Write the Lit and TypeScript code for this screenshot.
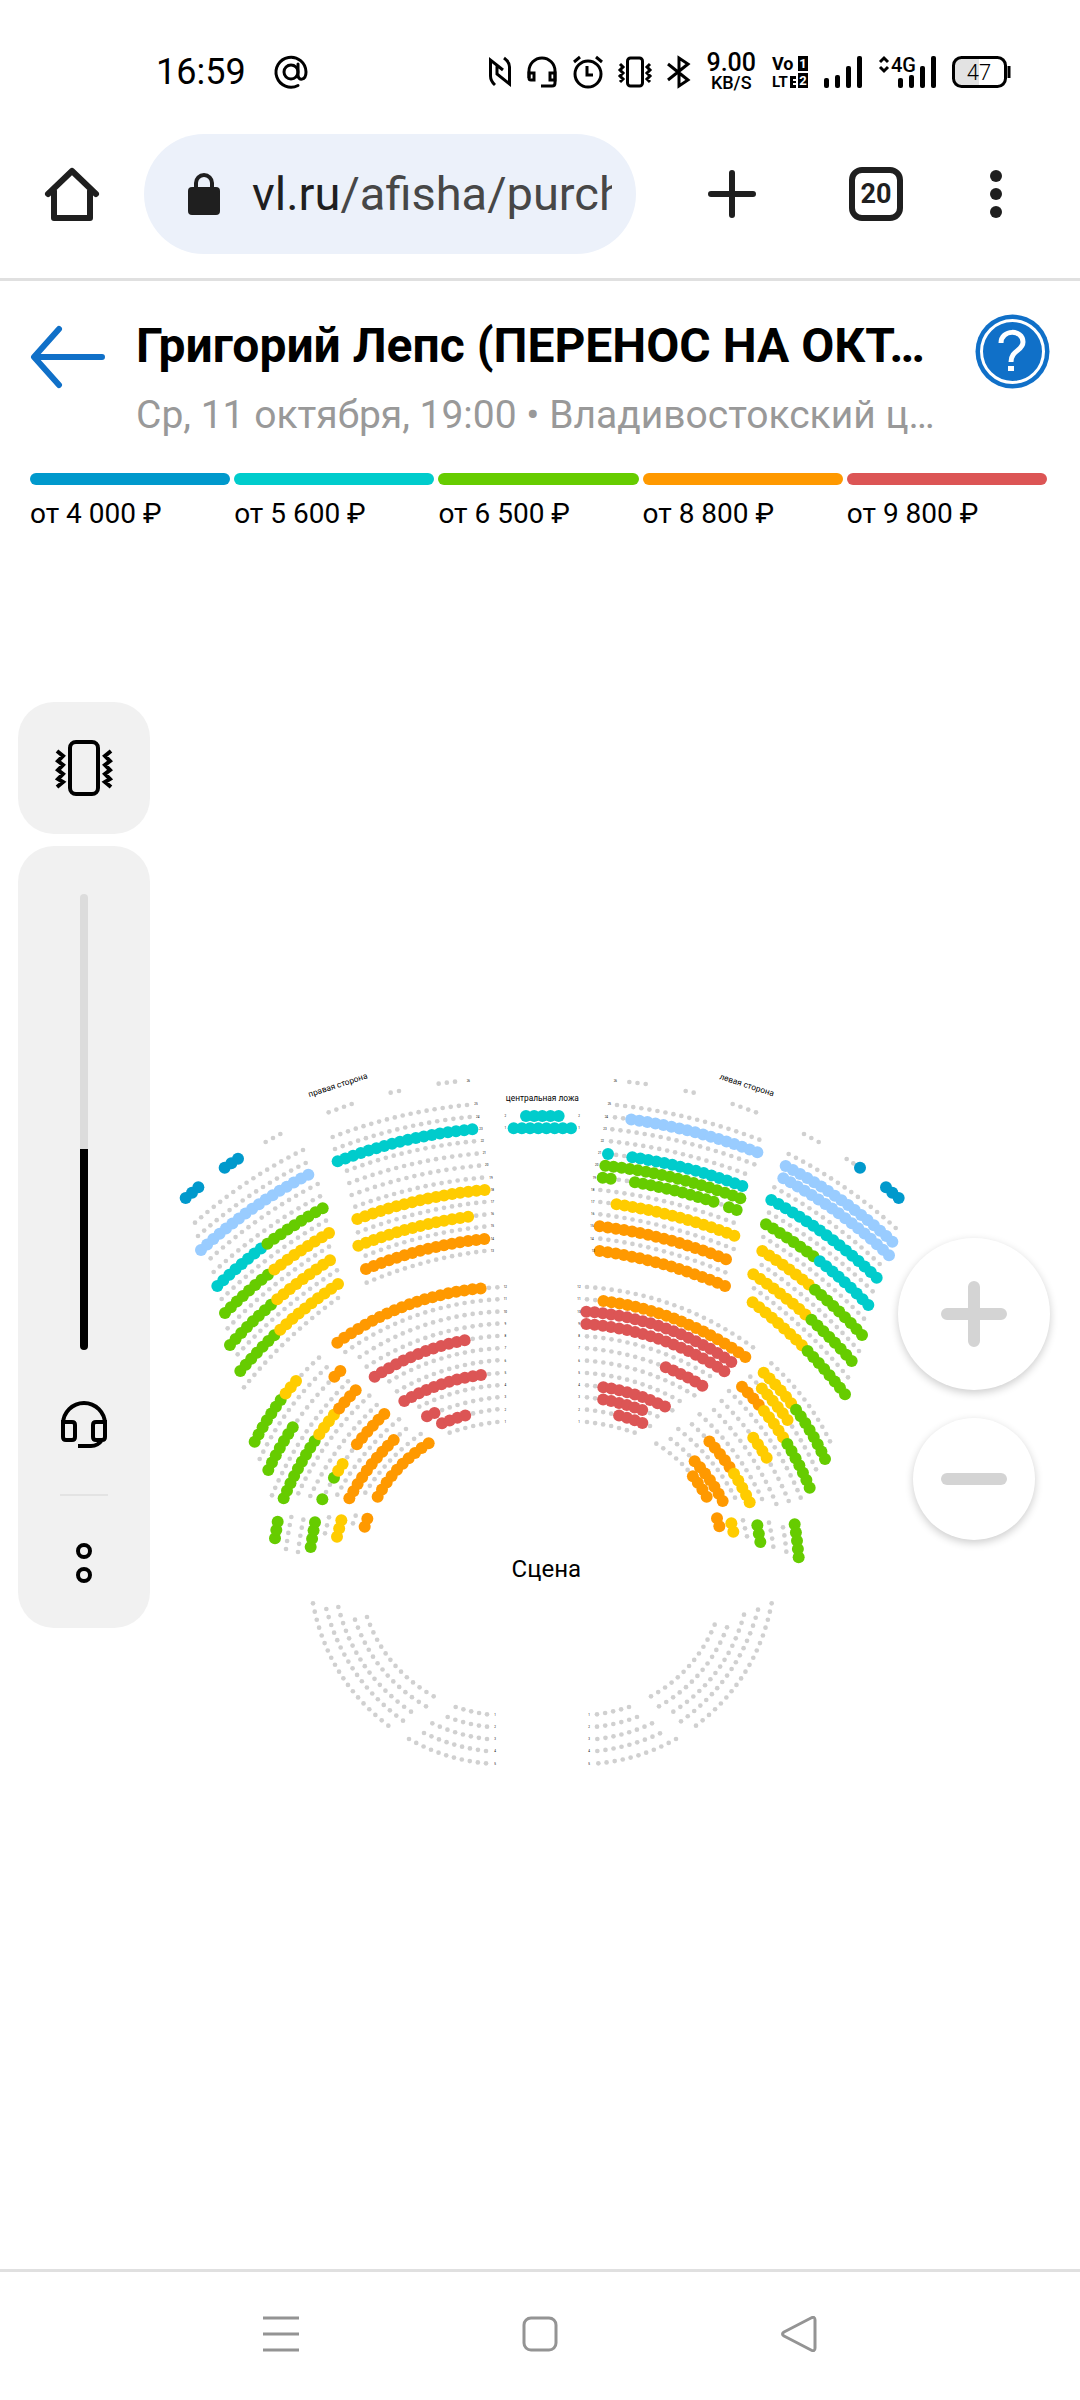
import { LitElement, html, svg, css } from "lit";
import { customElement, state } from "lit/decorators.js";

interface Price {
  label: string;
  color: string;
}

/** x1, y1, x2, y2, bulge, runs. A run is a colour key and a seat count; the last one fills the row. */
type Row = [number, number, number, number, number, string];

/** x, y, text */
type Label = [number, number, string];

const PRICES: Price[] = [
  { label: "от 4\u00a0000\u00a0₽", color: "#0099cc" },
  { label: "от 5\u00a0600\u00a0₽", color: "#00cccc" },
  { label: "от 6\u00a0500\u00a0₽", color: "#66cc00" },
  { label: "от 8\u00a0800\u00a0₽", color: "#ff9900" },
  { label: "от 9\u00a0800\u00a0₽", color: "#dc5555" },
];

const SEAT_COLORS: Record<string, string> = {
  ".": "#d0d0d0",
  a: "#99ccff",
  b: "#0099cc",
  c: "#00cccc",
  g: "#66cc00",
  y: "#ffcc00",
  o: "#ff9900",
  r: "#dc5555",
};

const SEAT_PITCH = 24.3;

const BALCONY: Row[] = [
  [506, 187, 575, 162, 0, "."],
  [692, 128, 717, 123, 0, "."],
  [836, 101, 885, 95, 0, "."],
  [317, 276, 361, 252, 0, "."],
  [194, 353, 234, 326, 0, "b"],
  [77, 444, 115, 412, 0, "b"],
  [1408, 96, 1457, 102, 0, "."],
  [1577, 123, 1601, 128, 0, "."],
  [1718, 162, 1788, 187, 0, "."],
  [1932, 252, 1976, 276, 0, "."],
  [2060, 327, 2100, 353, 0, ".2b"],
  [2178, 412, 2216, 444, 0, "b"],
  [1098, 198, 1196, 198, 0, "c"],
  [1061, 235, 1233, 235, 0, "c"],
];

const LEFT_UPPER: Row[] = [
  [518, 261, 921, 165, 14, "."],
  [525, 297, 929, 201, 14, "."],
  [533, 334, 937, 238, 14, "c"],
  [561, 362, 942, 274, 13, "."],
  [568, 399, 950, 311, 13, "."],
  [575, 435, 957, 347, 13, "."],
  [586, 470, 966, 383, 13, "."],
  [592, 507, 974, 420, 13, "y"],
  [594, 547, 973, 456, 13, "."],
  [595, 587, 973, 494, 13, "y15."],
  [617, 617, 973, 530, 13, "."],
  [618, 657, 973, 567, 13, "o"],
  [620, 698, 973, 603, 13, "."],
];

const LEFT_OUTER: Row[] = [
  [105, 518, 429, 300, 13, "."],
  [114, 558, 437, 339, 13, "."],
  [123, 600, 445, 374, 13, "a"],
  [152, 625, 473, 402, 13, "."],
  [161, 666, 480, 439, 13, "."],
  [172, 708, 488, 475, 13, "c8g"],
  [185, 747, 498, 512, 13, "."],
  [195, 789, 507, 549, 13, "g8y"],
  [203, 835, 507, 590, 13, "."],
  [210, 885, 510, 631, 13, "g8y"],
  [233, 913, 531, 661, 13, "."],
  [241, 963, 534, 702, 13, "g7y"],
  [252, 1012, 534, 744, 13, "."],
];

const LEFT_INNER: Row[] = [
  [532, 878, 1012, 712, 38, "o20."],
  [556, 906, 1012, 748, 34, "."],
  [599, 921, 1012, 785, 30, "."],
  [620, 950, 1012, 821, 27, "."],
  [644, 980, 1012, 858, 25, "r13."],
  [688, 994, 1012, 895, 20, "."],
  [711, 1024, 1012, 931, 18, "."],
  [733, 1053, 1012, 970, 17, "r11."],
  [778, 1070, 1012, 1006, 12, "."],
  [801, 1099, 1012, 1042, 9, "r2."],
  [846, 1120, 1012, 1078, 6, "r4."],
  [869, 1148, 1012, 1116, 4, "."],
];

const LEFT_LOWER: Row[] = [
  [284, 1175, 477, 923, 14, "g7y3."],
  [299, 1227, 500, 952, 16, "."],
  [325, 1260, 541, 963, 17, "g7.7o"],
  [336, 1336, 564, 994, 20, "."],
  [371, 1345, 587, 1021, 18, "g9y4o"],
  [415, 1330, 628, 1037, 18, "."],
  [451, 1338, 650, 1065, 16, "."],
  [487, 1348, 673, 1092, 14, "g1.2g1y2.2o"],
  [532, 1334, 717, 1108, 14, "."],
  [568, 1345, 738, 1137, 13, "o10."],
  [616, 1328, 782, 1152, 12, "."],
  [653, 1340, 806, 1180, 14, "o"],
  [345, 1465, 353, 1415, 0, "g"],
  [378, 1497, 394, 1401, 1, "."],
  [414, 1506, 430, 1409, 1, "."],
  [452, 1491, 465, 1417, 0, "g"],
  [495, 1450, 507, 1402, 0, "."],
  [531, 1460, 544, 1411, 0, "y"],
  [579, 1420, 587, 1397, 0, "."],
  [614, 1430, 622, 1406, 0, "o"],
];

const RIGHT_UPPER: Row[] = [
  [1371, 165, 1798, 269, 14, "."],
  [1365, 202, 1792, 307, 14, ".2a"],
  [1357, 238, 1783, 343, 14, "."],
  [1353, 274, 1755, 371, 13, "."],
  [1344, 312, 1747, 408, 13, "c1.2c"],
  [1336, 347, 1741, 445, 13, "g"],
  [1328, 383, 1730, 480, 13, "g2.2g11.1g"],
  [1321, 420, 1721, 518, 13, "."],
  [1321, 456, 1723, 557, 13, ".2y"],
  [1321, 493, 1721, 597, 13, "."],
  [1319, 529, 1698, 628, 13, "o"],
  [1321, 566, 1696, 667, 13, "."],
  [1319, 603, 1695, 708, 13, "o"],
];

const RIGHT_OUTER: Row[] = [
  [1886, 312, 2207, 534, 13, "."],
  [1877, 348, 2197, 575, 13, "a"],
  [1870, 385, 2187, 616, 13, "a"],
  [1843, 412, 2159, 642, 13, "."],
  [1834, 450, 2150, 683, 13, "c"],
  [1827, 488, 2138, 724, 13, "."],
  [1818, 523, 2125, 765, 13, "g8c"],
  [1810, 561, 2112, 806, 13, "."],
  [1807, 603, 2106, 855, 13, "y8g"],
  [1805, 645, 2097, 903, 13, "."],
  [1780, 673, 2075, 933, 13, "y9g"],
  [1782, 715, 2064, 982, 13, "."],
  [1778, 757, 2055, 1033, 13, "y9g"],
];

const RIGHT_INNER: Row[] = [
  [1281, 711, 1779, 892, 38, "."],
  [1281, 748, 1756, 921, 35, ".2o"],
  [1279, 785, 1714, 936, 31, "r"],
  [1279, 822, 1693, 964, 28, "r"],
  [1281, 859, 1650, 978, 23, "."],
  [1281, 895, 1627, 1007, 21, ".10r"],
  [1281, 932, 1603, 1036, 20, "."],
  [1281, 969, 1559, 1053, 16, "."],
  [1281, 1006, 1537, 1081, 14, ".2r9."],
  [1281, 1042, 1492, 1099, 9, ".2r6."],
  [1281, 1079, 1470, 1128, 7, ".4r4."],
  [1281, 1116, 1424, 1148, 4, "."],
];

const RIGHT_LOWER: Row[] = [
  [1834, 940, 2010, 1174, 14, "."],
  [1811, 968, 1995, 1227, 15, "y6g"],
  [1771, 980, 1968, 1258, 16, ".2y6."],
  [1746, 1010, 1949, 1313, 18, "o4y5g"],
  [1707, 1023, 1922, 1343, 20, "."],
  [1685, 1053, 1886, 1353, 18, ".6y4."],
  [1662, 1080, 1849, 1362, 16, "."],
  [1619, 1093, 1806, 1347, 16, "."],
  [1596, 1123, 1769, 1357, 15, ".3o5y"],
  [1555, 1137, 1725, 1343, 14, "."],
  [1532, 1167, 1688, 1353, 13, ".4o"],
  [1489, 1181, 1640, 1340, 14, ".6o"],
  [1671, 1405, 1678, 1429, 0, "o"],
  [1714, 1420, 1720, 1445, 0, "y"],
  [1749, 1411, 1761, 1459, 0, "."],
  [1792, 1426, 1801, 1476, 0, "g"],
  [1827, 1418, 1840, 1490, 1, "."],
  [1869, 1432, 1879, 1505, 1, "."],
  [1904, 1423, 1916, 1522, 1, "g"],
];

const BEHIND_STAGE: Row[] = [
  [459, 1660, 685, 2027, -41, "."],
  [499, 1677, 729, 2012, -36, "."],
  [535, 1671, 753, 1985, -36, "."],
  [585, 1709, 798, 1969, -31, "."],
  [621, 1701, 821, 1939, -29, "."],
  [887, 1971, 981, 1993, -2, "."],
  [863, 2001, 981, 2030, -4, "."],
  [817, 2020, 981, 2067, -7, "."],
  [792, 2049, 978, 2103, -8, "."],
  [747, 2067, 978, 2140, -13, "."],
  [1311, 1993, 1407, 1971, -2, "."],
  [1311, 2030, 1431, 2001, -4, "."],
  [1312, 2067, 1476, 2020, -7, "."],
  [1312, 2103, 1500, 2050, -8, "."],
  [1315, 2140, 1548, 2067, -13, "."],
  [1473, 1939, 1664, 1724, -25, "."],
  [1497, 1969, 1701, 1732, -28, "."],
  [1540, 1985, 1752, 1694, -34, "."],
  [1563, 2014, 1794, 1679, -36, "."],
  [1608, 2027, 1835, 1660, -41, "."],
];

const ROWS: Row[] = [
  ...BALCONY,
  ...LEFT_UPPER,
  ...LEFT_OUTER,
  ...LEFT_INNER,
  ...LEFT_LOWER,
  ...RIGHT_UPPER,
  ...RIGHT_OUTER,
  ...RIGHT_INNER,
  ...RIGHT_LOWER,
  ...BEHIND_STAGE,
];

const UPPER_LABEL_X_LEFT = [948, 953, 963, 967, 973, 980, 993, 997, 997, 997, 997, 997, 997];
const UPPER_LABEL_X_RIGHT = [1348, 1339, 1335, 1327, 1319, 1310, 1303, 1298, 1298, 1298, 1296, 1296, 1300];

const ROW_LABELS: Label[] = [
  [925, 95, "26"],
  [1366, 95, "26"],
  [1036, 201, "2"],
  [1036, 238, "1"],
  [1257, 201, "2"],
  [1257, 238, "1"],
  ...UPPER_LABEL_X_LEFT.map((x, i): Label => [x, Math.round(166 + i * 36.6), String(25 - i)]),
  ...UPPER_LABEL_X_RIGHT.map((x, i): Label => [x, Math.round(166 + i * 36.6), String(25 - i)]),
  ...Array.from({ length: 12 }, (_, i): Label => [1036, Math.round(714 + i * 36.8), String(12 - i)]),
  ...Array.from({ length: 12 }, (_, i): Label => [1257, Math.round(714 + i * 36.8), String(12 - i)]),
  ...Array.from({ length: 5 }, (_, i): Label => [1005, Math.round(1997 + i * 36.8), String(i + 1)]),
  ...Array.from({ length: 5 }, (_, i): Label => [1287, Math.round(1997 + i * 36.8), String(i + 1)]),
];

function expandRuns(runs: string, count: number): string[] {
  const seats: string[] = [];
  for (const [, key, size] of runs.matchAll(/([.abcgyor])(\d*)/g)) {
    const fill = size ? Number(size) : count - seats.length;
    for (let i = 0; i < fill; i++) seats.push(key);
  }
  return seats;
}

function drawRow([x1, y1, x2, y2, bulge, runs]: Row) {
  const dx = x2 - x1;
  const dy = y2 - y1;
  const chord = Math.hypot(dx, dy);
  const arc = chord + (8 * bulge * bulge) / (3 * chord);
  const count = Math.round(arc / SEAT_PITCH) + 1;
  return expandRuns(runs, count).map((key, i) => {
    const t = count > 1 ? i / (count - 1) : 0;
    const lift = 4 * t * (1 - t) * bulge;
    const x = x1 + dx * t + (dy / chord) * lift;
    const y = y1 + dy * t - (dx / chord) * lift;
    return svg`<circle cx=${x.toFixed(1)} cy=${y.toFixed(1)} r=${key === "." ? 7 : 18} fill=${SEAT_COLORS[key]}></circle>`;
  });
}

@customElement("status-bar")
class StatusBar extends LitElement {
  static styles = css`
    :host {
      display: flex;
      align-items: center;
      justify-content: space-between;
      padding: 40px 69px 0 156px;
      height: 64px;
      color: #000;
    }
    .side,
    .icons {
      display: flex;
      align-items: center;
    }
    .side {
      gap: 28px;
      font-size: 36px;
      line-height: 40px;
    }
    .icons {
      gap: 16px;
    }
    svg {
      display: block;
      overflow: visible;
      fill: none;
      stroke: #000;
      stroke-width: 3;
    }
    .solid {
      fill: #000;
      stroke: none;
    }
    .speed {
      text-align: center;
      font-weight: 500;
    }
    .rate,
    .unit {
      display: block;
    }
    .rate {
      font-size: 25px;
      line-height: 22px;
    }
    .unit {
      font-size: 18px;
      line-height: 18px;
    }
    .glyph {
      fill: #000;
      stroke: none;
      font-weight: 500;
    }
    .heavy {
      font-weight: 700;
    }
    .thin {
      font-weight: 300;
    }
    .knock {
      fill: #fff;
      font-weight: 700;
    }
  `;

  render() {
    return html`
      <div class="side">
        <span>16:59</span>
        <svg width="34" height="34" viewBox="0 0 34 34" role="img" aria-label="Почта">
          <circle cx="17" cy="17" r="7"></circle>
          <path d="M24 9v11c0 6 8 6 8-3A15 15 0 1 0 24 30.500" stroke-linecap="round"></path>
        </svg>
      </div>
      <div class="icons">
        <svg width="22" height="30" viewBox="0 0 22 30">
          <path d="M6 28Q1.500 24 1.500 19V3L14 13M15 1Q20.500 5 20.500 10V27L8 17V9"></path>
        </svg>
        <svg width="30" height="32" viewBox="0 0 30 32">
          <path d="M2 22V15a13 13 0 0 1 26 0V27q0 3-3 3H14"></path>
          <path d="M2 17h5v7H4q-2 0-2-2zM28 17h-5v7h5z"></path>
        </svg>
        <svg width="30" height="34" viewBox="0 0 30 34">
          <circle cx="15" cy="19" r="13"></circle>
          <path d="M1 7l6-5M29 7l-6-5M14 11v9h6"></path>
        </svg>
        <svg width="32" height="32" viewBox="0 0 32 32">
          <rect x="8.500" y="2" width="15" height="28" rx="3"></rect>
          <path d="M1 8l3 3-3 3 3 3-3 3 3 3-3 3M31 8l-3 3 3 3-3 3 3 3-3 3 3 3"></path>
        </svg>
        <svg width="23" height="32" viewBox="0 0 23 32">
          <path d="M1 8l20 16-9 6V2l9 6L1 24"></path>
        </svg>
        <div class="speed"><span class="rate">9.00</span><span class="unit">KB/S</span></div>
        <svg width="36" height="34" viewBox="0 0 36 34" class="solid">
          <text class="glyph heavy" x="0" y="15" font-size="18">Vo</text>
          <text class="glyph heavy" x="0" y="32" font-size="15">LT</text>
          <path d="M18 21h6v3h-3v2h3v2h-3v2h3v3h-6z"></path>
          <rect x="26" y="1" width="10" height="15"></rect>
          <rect x="26" y="18" width="10" height="15"></rect>
          <text class="knock" x="31" y="13" font-size="13" text-anchor="middle">1</text>
          <text class="knock" x="31" y="30" font-size="13" text-anchor="middle">2</text>
        </svg>
        <svg width="39" height="32" viewBox="0 0 39 32" class="solid">
          <rect x="0" y="22" width="5" height="10" rx="2"></rect>
          <rect x="11" y="19" width="5" height="13" rx="2"></rect>
          <rect x="22" y="10" width="5" height="22" rx="2"></rect>
          <rect x="33" y="0" width="5" height="32" rx="2"></rect>
        </svg>
        <svg width="57" height="32" viewBox="0 0 57 32" class="solid">
          <rect x="19" y="22" width="5" height="10" rx="2"></rect>
          <rect x="30" y="19" width="5" height="13" rx="2"></rect>
          <rect x="41" y="10" width="5" height="22" rx="2"></rect>
          <rect x="52" y="0" width="5" height="32" rx="2"></rect>
          <path fill="none" stroke="#000" stroke-width="3" d="M1 6l4-4 4 4M1 11l4 4 4-4"></path>
          <text class="glyph" x="12" y="16" font-size="20">4G</text>
        </svg>
        <svg width="59" height="32" viewBox="0 0 59 32">
          <path fill="#e3e3e3" stroke="none" d="M9 2H27V30H9Q2 30 2 22V10Q2 2 9 2z"></path>
          <rect x="1.500" y="1.500" width="52" height="29" rx="8"></rect>
          <path d="M57 10v12"></path>
          <text class="glyph thin" x="27" y="24" font-size="22" text-anchor="middle">47</text>
        </svg>
      </div>
    `;
  }
}

@customElement("browser-bar")
class BrowserBar extends LitElement {
  static styles = css`
    :host {
      display: flex;
      align-items: center;
      padding: 30px 48px 24px 36px;
      border-bottom: 3px solid #e0e0e0;
    }
    button {
      display: flex;
      align-items: center;
      justify-content: center;
      flex: none;
      width: 72px;
      height: 72px;
      padding: 0;
      border: 0;
      background: none;
      font: inherit;
      color: #1f1f1f;
    }
    .address {
      flex: 1;
      min-width: 0;
      height: 120px;
      margin: 0 60px 0 36px;
      padding: 0 24px 0 44px;
      gap: 32px;
      justify-content: flex-start;
      border-radius: 60px;
      background: #ecf1fa;
    }
    .lock {
      flex: none;
    }
    .url {
      flex: 1;
      overflow: hidden;
      white-space: nowrap;
      text-align: left;
      font-size: 47px;
      line-height: 60px;
    }
    .path {
      color: #474747;
    }
    .tabs {
      margin-left: 72px;
    }
    .count {
      box-sizing: border-box;
      width: 54px;
      height: 54px;
      border: 6px solid #1f1f1f;
      border-radius: 13px;
      font-size: 27px;
      font-weight: 700;
      line-height: 42px;
    }
    .more {
      margin-left: 48px;
    }
    svg {
      display: block;
    }
    .line {
      fill: none;
      stroke: #1f1f1f;
      stroke-width: 6;
      stroke-linecap: round;
      stroke-linejoin: round;
    }
  `;

  render() {
    return html`
      <button aria-label="Домой">
        <svg class="line" width="56" height="56" viewBox="0 0 56 56">
          <path d="M4 28L28 5l24 23M10 25V52H46V25"></path>
        </svg>
      </button>
      <button class="address" aria-label="Адрес сайта">
        <svg class="lock" width="32" height="42" viewBox="0 0 32 42">
          <rect y="14" width="32" height="28" rx="4" fill="#1f1f1f"></rect>
          <path d="M8 16V10a8 8 0 0 1 16 0v6" fill="none" stroke="#1f1f1f" stroke-width="4"></path>
        </svg>
        <span class="url">vl.ru<span class="path">/afisha/purch</span></span>
      </button>
      <button aria-label="Новая вкладка">
        <svg class="line" width="48" height="48" viewBox="0 0 48 48"><path d="M3 24h42M24 3v42"></path></svg>
      </button>
      <button class="tabs" aria-label="Вкладки"><span class="count">20</span></button>
      <button class="more" aria-label="Меню">
        <svg width="12" height="48" viewBox="0 0 12 48" fill="#1f1f1f">
          <circle cx="6" cy="6" r="6"></circle>
          <circle cx="6" cy="24" r="6"></circle>
          <circle cx="6" cy="42" r="6"></circle>
        </svg>
      </button>
    `;
  }
}

@customElement("event-header")
class EventHeader extends LitElement {
  static styles = css`
    :host {
      display: block;
      padding: 33px 30px 0;
    }
    .top {
      display: flex;
      align-items: flex-start;
      gap: 30px;
    }
    .back {
      display: block;
      margin-top: 11px;
    }
    svg {
      display: block;
    }
    .text {
      flex: 1;
      min-width: 0;
    }
    h1,
    p {
      margin: 0;
      overflow: hidden;
      text-overflow: ellipsis;
      white-space: nowrap;
    }
    h1 {
      padding-top: 2px;
      font-size: 48px;
      font-weight: 700;
      line-height: 60px;
      color: #000;
    }
    p {
      padding-top: 10px;
      font-size: 39px;
      line-height: 58px;
      color: #999;
    }
    .help {
      padding: 0;
      border: 0;
      background: none;
    }
    .prices {
      display: grid;
      grid-template-columns: repeat(5, 1fr);
      gap: 4px;
      margin: 29px 3px 0 0;
      padding: 0;
      list-style: none;
      font-size: 28px;
      line-height: 34px;
      color: #000;
    }
    .prices li::before {
      content: "";
      display: block;
      height: 12px;
      margin-bottom: 12px;
      border-radius: 6px;
      background: var(--tone);
    }
  `;

  render() {
    return html`
      <div class="top">
        <a class="back" href="#" aria-label="Назад">
          <svg width="76" height="64" viewBox="0 0 76 64" fill="none" stroke="#1070c8" stroke-width="6" stroke-linecap="round" stroke-linejoin="round">
            <path d="M29 4L4 32l25 28M5 32h67"></path>
          </svg>
        </a>
        <div class="text">
          <h1>Григорий Лепс (ПЕРЕНОС НА ОКТ…</h1>
          <p>Ср, 11 октября, 19:00 • Владивостокский ц…</p>
        </div>
        <button class="help" aria-label="Помощь">
          <svg width="75" height="75" viewBox="0 0 75 75" fill="none">
            <circle cx="37.500" cy="37.500" r="37" fill="#1070c8"></circle>
            <circle cx="37.500" cy="37.500" r="31" stroke="#fff" stroke-width="3"></circle>
            <path d="M26 29C26 15 48 15 48 28C48 37 36 36 36 48" stroke="#fff" stroke-width="5"></path>
            <path d="M33 52h6v5h-6z" fill="#fff"></path>
          </svg>
        </button>
      </div>
      <ul class="prices">
        ${PRICES.map((price) => html`<li style="--tone:${price.color}">${price.label}</li>`)}
      </ul>
    `;
  }
}

@customElement("seat-map")
class SeatMap extends LitElement {
  static styles = css`
    :host {
      display: block;
    }
    svg {
      display: block;
      width: 100%;
    }
    .row {
      font-size: 9px;
    }
    .zone {
      font-size: 25px;
    }
    .stage {
      font-size: 72px;
    }
  `;

  render() {
    return html`
      <svg viewBox="-480 -159 3240 2418" role="img" aria-label="Схема зала">
        ${ROWS.map(drawRow)}
        <g class="row" text-anchor="middle">
          ${ROW_LABELS.map(([x, y, text]) => svg`<text x=${x} y=${y}>${text}</text>`)}
        </g>
        <g class="zone" text-anchor="middle">
          <text transform="translate(536 113) rotate(-18)">правая сторона</text>
          <text x="1147" y="153">центральная ложа</text>
          <text transform="translate(1758 113) rotate(18)">левая сторона</text>
        </g>
        <text class="stage" text-anchor="middle" x="1159" y="1581">Сцена</text>
      </svg>
    `;
  }
}

@customElement("volume-panel")
class VolumePanel extends LitElement {
  static styles = css`
    :host {
      display: flex;
      flex-direction: column;
      gap: 12px;
      width: 132px;
    }
    .mode,
    .levels {
      border-radius: 36px;
      background: #f1f1f1;
    }
    button {
      display: flex;
      justify-content: center;
      padding: 0;
      border: 0;
      background: none;
    }
    .mode {
      height: 132px;
      align-items: center;
    }
    .levels {
      display: flex;
      flex-direction: column;
      align-items: center;
      padding: 48px 0 44px;
    }
    input {
      appearance: none;
      writing-mode: vertical-lr;
      direction: rtl;
      width: 8px;
      height: 456px;
      margin: 0;
      border-radius: 4px;
    }
    input::-webkit-slider-thumb {
      appearance: none;
      width: 8px;
      height: 8px;
      background: none;
    }
    .device {
      margin-top: 50px;
    }
    .rule {
      width: 48px;
      height: 2px;
      margin: 46px 0;
      background: #e3e3e3;
    }
    svg {
      display: block;
      fill: none;
      stroke: #000;
      stroke-width: 4;
    }
  `;

  @state() private level = 44;

  private onInput(event: Event) {
    this.level = Number((event.target as HTMLInputElement).value);
  }

  render() {
    return html`
      <button class="mode" aria-label="Вибрация">
        <svg width="58" height="56" viewBox="0 0 58 56">
          <rect x="15" y="2" width="28" height="52" rx="6"></rect>
          <path d="M2 11l6 5-5 5 5 4-5 5 5 4-5 5 5 3-6 5M56 11l-6 5 5 5-5 4 5 5-5 4 5 5-5 3 6 5"></path>
        </svg>
      </button>
      <div class="levels">
        <input
          type="range"
          aria-label="Громкость"
          min="0"
          max="100"
          .value=${String(this.level)}
          @input=${this.onInput}
          style="background:linear-gradient(to top,#000 ${this.level}%,#dcdcdc ${this.level}%)"
        />
        <button class="device" aria-label="Наушники">
          <svg width="46" height="48" viewBox="0 0 46 48">
            <path d="M2 24a21 21 0 0 1 42 0M2 22h9q3 0 3 3v12q0 3-3 3H5q-3 0-3-3zM44 22h-9q-3 0-3 3v12q0 3 3 3h6q3 0 3-3zM41 40q-4 6-11 6H17"></path>
          </svg>
        </button>
        <div class="rule"></div>
        <button aria-label="Ещё">
          <svg width="18" height="42" viewBox="0 0 18 42">
            <circle cx="9" cy="9" r="6"></circle>
            <circle cx="9" cy="33" r="6"></circle>
          </svg>
        </button>
      </div>
    `;
  }
}

@customElement("app-root")
class AppRoot extends LitElement {
  static styles = css`
    :host {
      display: flex;
      flex-direction: column;
      min-height: 100vh;
      background: #fff;
      font-family: Roboto, "Liberation Sans", sans-serif;
    }
    main {
      position: relative;
      flex: 1;
      display: flex;
      flex-direction: column;
      justify-content: center;
    }
    volume-panel {
      position: absolute;
      left: 18px;
      top: 171px;
    }
    .zoom {
      position: absolute;
      right: 30px;
      top: 707px;
      display: flex;
      flex-direction: column;
      align-items: center;
      gap: 28px;
    }
    .zoom button {
      display: flex;
      align-items: center;
      justify-content: center;
      width: 122px;
      height: 122px;
      padding: 0;
      border: 0;
      border-radius: 50%;
      background: #fff;
      box-shadow: 0 3px 9px rgba(0, 0, 0, 0.2);
    }
    .zoom .in {
      width: 152px;
      height: 152px;
    }
    .zoom svg {
      stroke: #d4d4d4;
      stroke-width: 12;
      stroke-linecap: round;
    }
    nav {
      display: grid;
      grid-template-columns: repeat(3, 1fr);
      padding: 0 14%;
      border-top: 3px solid #e0e0e0;
    }
    nav button {
      display: flex;
      align-items: center;
      justify-content: center;
      height: 128px;
      padding: 0 0 4px;
      border: 0;
      background: none;
    }
    nav svg {
      fill: none;
      stroke: #949494;
      stroke-width: 3;
      stroke-linejoin: round;
    }
  `;

  render() {
    return html`
      <status-bar></status-bar>
      <browser-bar></browser-bar>
      <event-header></event-header>
      <main>
        <seat-map></seat-map>
        <volume-panel></volume-panel>
        <div class="zoom">
          <button class="in" aria-label="Приблизить">
            <svg width="66" height="66" viewBox="0 0 66 66"><path d="M6 33h54M33 6v54"></path></svg>
          </button>
          <button aria-label="Отдалить">
            <svg width="66" height="12" viewBox="0 0 66 12"><path d="M6 6h54"></path></svg>
          </button>
        </div>
      </main>
      <nav>
        <button aria-label="Недавние">
          <svg width="36" height="36" viewBox="0 0 36 36"><path d="M0 2h36M0 18h36M0 34h36"></path></svg>
        </button>
        <button aria-label="Главный экран">
          <svg width="36" height="36" viewBox="0 0 36 36"><rect x="2" y="2" width="32" height="32" rx="7"></rect></svg>
        </button>
        <button aria-label="Назад">
          <svg width="36" height="36" viewBox="0 0 36 36">
            <path d="M3 16Q0 18 3 20L30 34Q34 36 34 32V4Q34 0 30 2z"></path>
          </svg>
        </button>
      </nav>
    `;
  }
}
